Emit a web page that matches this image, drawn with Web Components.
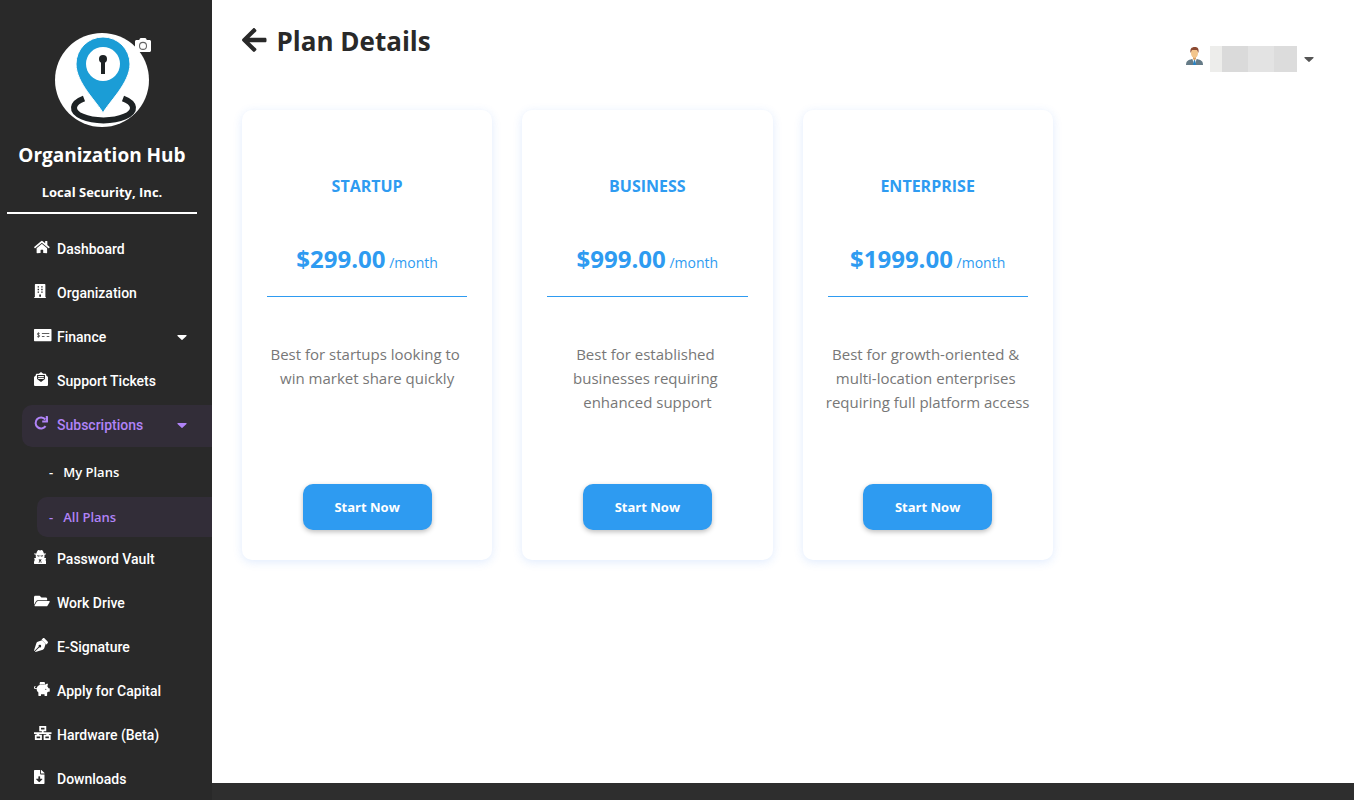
<!DOCTYPE html>
<html lang="en">
<head>
<meta charset="utf-8">
<title>Plan Details</title>
<style>
  body {
    margin: 0;
    background: #2e2e2e;
    font-family: "Open Sans", "Noto Sans", sans-serif;
  }
</style>
</head>
<body>
<hub-layout>
  <hub-sidebar slot="side" name="Organization Hub" company="Local Security, Inc.">
    <nav-item icon="home">Dashboard</nav-item>
    <nav-item icon="building">Organization</nav-item>
    <nav-item icon="check" caret>Finance</nav-item>
    <nav-item icon="mail">Support Tickets</nav-item>
    <nav-item icon="redo" caret active>Subscriptions
      <nav-subitem slot="sub">My Plans</nav-subitem>
      <nav-subitem slot="sub" active>All Plans</nav-subitem>
    </nav-item>
    <nav-item icon="spy">Password Vault</nav-item>
    <nav-item icon="folder">Work Drive</nav-item>
    <nav-item icon="pen">E-Signature</nav-item>
    <nav-item icon="pig">Apply for Capital</nav-item>
    <nav-item icon="network">Hardware (Beta)</nav-item>
    <nav-item icon="download">Downloads</nav-item>
  </hub-sidebar>
  <page-header>Plan Details</page-header>
  <plan-list>
    <plan-card name="STARTUP" price="$299.00">Best for startups looking to <br>win market share quickly</plan-card>
    <plan-card name="BUSINESS" price="$999.00">Best for established <br>businesses requiring <br>enhanced support</plan-card>
    <plan-card name="ENTERPRISE" price="$1999.00">Best for growth-oriented &amp; <br>multi-location enterprises <br>requiring full platform access</plan-card>
  </plan-list>
</hub-layout>

<script>
const icons = {
  home: ['0 0 576 512', '<path d="M280.37 148.26L96 300.11V464a16 16 0 0 0 16 16l112.06-.29a16 16 0 0 0 15.92-16V368a16 16 0 0 1 16-16h64a16 16 0 0 1 16 16v95.64a16 16 0 0 0 16 16.05L464 480a16 16 0 0 0 16-16V300L295.67 148.26a12.19 12.19 0 0 0-15.3 0zM571.6 251.47L488 182.56V44.05a12 12 0 0 0-12-12h-56a12 12 0 0 0-12 12v72.61L318.47 43a48 48 0 0 0-61 0L4.34 251.47a12 12 0 0 0-1.6 16.9l25.5 31A12 12 0 0 0 45.15 301l235.22-193.74a12.19 12.19 0 0 1 15.3 0L530.9 301a12 12 0 0 0 16.9-1.6l25.5-31a12 12 0 0 0-1.7-16.93z"/>'],
  building: ['0 0 448 512', '<path fill-rule="evenodd" d="M436 480h-20V24c0-13-11-24-24-24H56C43 0 32 11 32 24v456H12c-7 0-12 5-12 12v20h448v-20c0-7-5-12-12-12zM132 80h52v52h-52zM264 80h52v52h-52zM132 176h52v52h-52zM264 176h52v52h-52zM132 272h52v52h-52zM264 272h52v52h-52zM192 384h64v80h-64z"/>'],
  check: ['0 0 640 512', '<path fill-rule="evenodd" d="M24 32h592c13 0 24 11 24 24v400c0 13-11 24-24 24H24c-13 0-24-11-24-24V56c0-13 11-24 24-24zM288 190h272v32H288zM288 304h96v24h-96zM464 304h96v24h-96z"/><path d="M208 202c-40-22-88-14-88 20 0 44 92 24 92 68 0 36-56 42-100 20M162 160v192" fill="none" stroke="#292929" stroke-width="24"/>'],
  mail: ['0 0 512 512', '<path fill-rule="evenodd" d="M256 0l-80 64H112c-26 0-48 20-48 46v16L18 164C7 173 0 186 0 200v264c0 26 22 48 48 48h416c26 0 48-22 48-48V200c0-14-7-27-18-36l-46-38v-16c0-26-22-46-48-46h-64zM112 112h288v146L256 362 112 258z"/><path d="M152 144h208v40H152zM152 214h208v40H152z"/>'],
  redo: ['0 0 512 512', '<path d="M423 370A200 200 0 1 1 414 128" fill="none" stroke="currentColor" stroke-width="74"/><path d="M512 24v192c0 12-10 20-22 20H300v-76h130V4h60c12 0 22 8 22 20z"/>'],
  spy: ['0 0 448 512', '<path fill-rule="evenodd" d="M16 128h70c18-52 42-112 72-124 24-8 44 14 66 14s42-22 66-14c30 12 54 72 72 124h70c20 0 22 20 4 28-16 10-30 16-52 22v70c0 18-4 30-10 42h50c14 0 20 12 16 24l-20 54c16 18 28 44 28 80v38c0 16-10 28-24 28H24c-14 0-24-12-24-28v-38c0-36 12-62 28-80l-22-54c-4-12 4-24 16-24h52c-6-12-10-24-10-42v-70c-22-6-36-12-52-22-18-8-16-28 4-28zM168 326l26 56-26 86h32l16-70h16l16 70h32l-26-86 26-56-40 18h-32zM116 194c24 8 66 12 108 12s84-4 108-12v20c-14 2-20 28-52 28-28 0-38-22-56-22s-28 22-56 22c-32 0-38-26-52-28z"/>'],
  folder: ['0 0 576 512', '<path d="M572.694 292.093L500.27 416.248A63.997 63.997 0 0 1 444.989 448H45.025c-18.523 0-30.064-20.093-20.731-36.093l72.424-124.155A64 64 0 0 1 152 256h399.964c18.523 0 30.064 20.093 20.73 36.093zM152 224h328v-48c0-26.51-21.49-48-48-48H272l-64-64H48C21.49 64 0 85.49 0 112v278.046l69.077-118.418C86.214 242.25 117.989 224 152 224z"/>'],
  pen: ['0 0 512 512', '<path fill-rule="evenodd" d="M136 138c-24 8-42 26-50 50L0 460l14 14 160-160a46 46 0 1 1 24 24L38 498l14 14 272-86c24-8 42-26 50-50l52-156L292 86zM498 124L388 14c-18-18-50-18-68 0l-44 44 178 178 44-44c18-18 18-50 0-68z"/>'],
  pig: ['0 0 576 512', '<path d="M206 68a98 98 0 0 1 196 0c0 12-2 22-6 32-44-8-116-12-184 4-4-12-6-24-6-36z"/><path d="M560 224h-30c-10-24-24-42-42-58l24-102h-32c-30 0-56 14-74 36-8-2-14-4-22-4H256c-78 0-142 54-156 128H56c-14 0-26-14-22-30 2-10 14-16 24-16V144C26 142 4 168 0 192c-4 34 22 64 56 64h40c0 52 26 98 64 128v112c0 8 8 16 16 16h64c8 0 16-8 16-16v-48h128v48c0 8 8 16 16 16h64c8 0 16-8 16-16V384c14-10 24-20 34-32h46c8 0 16-8 16-16v-96c0-8-8-16-16-16zm-128 64a20 20 0 1 1 0-40 20 20 0 0 1 0 40z"/>'],
  network: ['0 0 640 512', '<path fill-rule="evenodd" d="M192 0h256v192h-96v32h288v64H544v32h64v192H352V320h96v-32H192v32h96v192H32V320h64v-32H0v-64h288v-32h-96zM256 64v64h128V64zM96 384v64h128v-64zM416 384v64h128v-64z"/>'],
  download: ['0 0 384 512', '<path d="M224 136V0H24C10.7 0 0 10.7 0 24v464c0 13.3 10.7 24 24 24h336c13.3 0 24-10.7 24-24V160H248c-13.2 0-24-10.8-24-24zm76.45 211.36l-96.42 95.7c-6.65 6.61-17.39 6.61-24.04 0l-96.42-95.7C73.42 337.29 80.54 320 94.82 320H160v-80c0-8.84 7.16-16 16-16h32c8.84 0 16 7.16 16 16v80h65.18c14.28 0 21.4 17.29 11.27 27.36zM377 105L279.1 7c-4.5-4.5-10.6-7-17-7H256v128h128v-6.1c0-6.3-2.5-12.4-7-16.9z"/>'],
  camera: ['0 0 512 512', '<path d="M512 144v288c0 26-22 48-48 48H48c-26 0-48-22-48-48V144c0-26 22-48 48-48h88l12-33c7-19 25-31 45-31h126c20 0 38 12 45 31l12 33h88c26 0 48 22 48 48z"/><circle cx="256" cy="284" r="112" fill="none" stroke="#666" stroke-width="34"/>'],
  back: ['0 0 448 512', '<path d="M257.5 445.1l-22.2 22.2c-9.4 9.4-24.6 9.4-33.9 0L7 273c-9.4-9.4-9.4-24.6 0-33.9L201.4 44.7c9.4-9.4 24.6-9.4 33.9 0l22.2 22.2c9.5 9.5 9.3 25-.4 34.3L136.6 216H424c13.3 0 24 10.7 24 24v32c0 13.3-10.7 24-24 24H136.6l120.5 114.8c9.8 9.3 10 24.8.4 34.3z"/>'],
  caret: ['0 0 320 192', '<path d="M31 32h258c18 0 27 21 14 34L174 186c-8 8-20 8-28 0L17 66C4 53 13 32 31 32z"/>']
};

function define(name, html, setup) {
  let template = document.createElement('template');
  template.innerHTML = html;
  customElements.define(name, class extends HTMLElement {
    constructor() {
      super();
      this.attachShadow({mode: 'open'}).appendChild(template.content.cloneNode(true));
    }
    connectedCallback() {
      if (setup) setup(this, this.shadowRoot);
    }
  });
}

define('hub-icon', `
  <style>
    :host { display: inline-flex; height: 14px; }
    svg { height: 100%; fill: currentColor; }
  </style>
  <svg aria-hidden="true"></svg>
`, (elt, root) => {
  let [box, shapes] = icons[elt.getAttribute('name')];
  let svg = root.querySelector('svg');
  svg.setAttribute('viewBox', box);
  svg.innerHTML = shapes;
});

define('hub-layout', `
  <style>
    :host {
      display: grid;
      grid-template-columns: 212px 1fr;
      grid-template-rows: 1fr 17px;
      height: 100vh;
      overflow: hidden;
    }
    aside {
      grid-row: 1 / 3;
      background: #292929;
      overflow: hidden;
    }
    main {
      background: #fff;
      padding: 22px 21px 22px 30px;
      overflow: hidden;
    }
  </style>
  <aside><slot name="side"></slot></aside>
  <main><slot></slot></main>
`);

define('hub-sidebar', `
  <style>
    :host { display: block; color: #fff; }
    header {
      display: flex;
      flex-direction: column;
      align-items: center;
      margin: 0 15px 15px 7px;
      padding-top: 33px;
      border-bottom: 2px solid #fff;
      text-align: center;
    }
    .logo { position: relative; height: 94px; }
    .logo button {
      position: absolute;
      top: 4px;
      right: -2px;
      display: flex;
      padding: 0;
      border: 0;
      background: none;
      color: #fff;
    }
    .logo hub-icon { height: 16px; }
    h1 { margin: 14px 0 0; font-size: 19px; line-height: 28px; white-space: nowrap; }
    h2 { margin: 13px 0 10px; font-size: 13px; line-height: 20px; }
    nav { padding-left: 22px; }
  </style>
  <header>
    <div class="logo">
      <svg width="94" height="94" viewBox="0 0 94 94" role="img" aria-label="Organization logo">
        <circle cx="47" cy="47" r="47" fill="#fff"/>
        <path d="M29 65.500A29.500 12.500 0 1 0 68 65.500" fill="none" stroke="#1d2224" stroke-width="6"/>
        <path d="M48 80C43 70 21 50 21 31a27 27 0 0 1 54 0c0 19-22 39-27 49z" fill="#1b9dd6" stroke="#fff" stroke-width="1"/>
        <circle cx="48" cy="31" r="17" fill="#fff"/>
        <circle cx="48" cy="26" r="4" fill="#1d2224"/>
        <path d="M46 26h4v15h-4z" fill="#1d2224"/>
      </svg>
      <button aria-label="Change logo"><hub-icon name="camera"></hub-icon></button>
    </div>
    <h1></h1>
    <h2></h2>
  </header>
  <nav><slot></slot></nav>
`, (elt, root) => {
  root.querySelector('h1').textContent = elt.getAttribute('name');
  root.querySelector('h2').textContent = elt.getAttribute('company');
});

define('nav-item', `
  <style>
    :host { display: block; margin-bottom: 2px; font: 500 14px/20px Roboto, sans-serif; }
    a {
      display: flex;
      align-items: center;
      box-sizing: border-box;
      height: 42px;
      padding: 0 25px 2px 12px;
      border-radius: 10px 0 0 10px;
      color: #fff;
      text-decoration: none;
    }
    .icon { width: 23px; padding-bottom: 4px; display: flex; }
    .label { flex: 1; white-space: nowrap; }
    .caret { height: 6px; }
    :host([active]) a { background: #322d38; color: #b083f7; }
    :host(:not([caret])) .caret { display: none; }
  </style>
  <a href="#">
    <span class="icon"></span>
    <span class="label"><slot></slot></span>
    <hub-icon class="caret" name="caret"></hub-icon>
  </a>
  <slot name="sub"></slot>
`, (elt, root) => {
  root.querySelector('.icon').innerHTML = `<hub-icon name="${elt.getAttribute('icon')}"></hub-icon>`;
});

define('nav-subitem', `
  <style>
    :host {
      display: block;
      margin: 5px 0 0 15px;
      font: 600 13px/20px "Open Sans", "Noto Sans", sans-serif;
    }
    a {
      display: flex;
      gap: 10px;
      align-items: center;
      height: 40px;
      padding-left: 12px;
      border-radius: 10px 0 0 10px;
      color: #fff;
      text-decoration: none;
    }
    :host([active]) a { background: #322d38; color: #b083f7; }
  </style>
  <a href="#"><span>-</span><span><slot></slot></span></a>
`);

define('page-header', `
  <style>
    :host { display: flex; justify-content: space-between; height: 88px; color: #292929; }
    .title { display: flex; gap: 10px; align-items: center; height: 38px; }
    .title a { display: flex; padding-bottom: 2px; color: inherit; }
    .title hub-icon { height: 28px; }
    h1 { margin: 0; font-size: 26px; line-height: 38px; }
    button {
      display: flex;
      align-items: center;
      height: 26px;
      margin: 24px 19px 0 0;
      padding: 0;
      border: 0;
      background: none;
      color: #555;
    }
    .avatar { margin: 0 7px 6px 0; }
    .name { width: 87px; height: 26px; margin-right: 7px; background: linear-gradient(90deg, #ededeb 12px, #dadada 12px 38px, #e3e3e3 38px 64px, #dcdcdc 64px); }
    button hub-icon { height: 6px; }
  </style>
  <div class="title">
    <a href="#" aria-label="Back"><hub-icon name="back"></hub-icon></a>
    <h1><slot></slot></h1>
  </div>
  <button aria-label="Account">
    <svg class="avatar" width="17" height="18" viewBox="0 0 17 18" aria-hidden="true">
      <path d="M0 18c0-4 2-5 6-6h5c4 1 6 2 6 6z" fill="#657b87"/>
      <path d="M6 11l2.500 7L11 11z" fill="#fff"/>
      <path d="M8 13h1l1 5H7z" fill="#2683c6"/>
      <path d="M7 9h3v3l-1.500 1.500L7 12z" fill="#d9a066"/>
      <ellipse cx="8.500" cy="6" rx="3.500" ry="5" fill="#f3c58c"/>
      <path d="M4.500 6C4 2 5 0 9 0c3 0 4 2 3.500 6L11 3H6z" fill="#8c4a32"/>
    </svg>
    <span class="name"></span>
    <hub-icon name="caret"></hub-icon>
  </button>
`);

define('plan-list', `
  <style>
    :host { display: grid; grid-template-columns: repeat(4, 1fr); gap: 30px; }
  </style>
  <slot></slot>
`);

define('plan-card', `
  <style>
    :host {
      display: flex;
      flex-direction: column;
      align-items: center;
      box-sizing: border-box;
      min-height: 450px;
      padding: 64px 20px 30px;
      border-radius: 10px;
      background: #fff;
      box-shadow: 0 2px 10px rgb(46 120 242 / 0.15);
      color: #2e9bf1;
      text-align: center;
    }
    h2 { margin: 0; font-size: 16px; line-height: 24px; }
    .price {
      align-self: stretch;
      margin: 44px 5px 45px;
      padding-bottom: 16px;
      border-bottom: 1px solid #2e9bf1;
      font-size: 14px;
      line-height: 34px;
    }
    .price b { font-size: 24px; }
    .text { flex: 1; font-size: 15px; line-height: 24px; color: #777; white-space: pre; }
    button {
      width: 129px;
      height: 46px;
      border: 0;
      border-radius: 10px;
      background: #2e9bf1;
      box-shadow: 0 2px 5px rgb(0 0 0 / 0.25);
      color: #fff;
      font: 700 13px/20px "Open Sans", "Noto Sans", sans-serif;
    }
  </style>
  <h2></h2>
  <div class="price"><b></b> /month</div>
  <div class="text"><slot></slot></div>
  <button>Start Now</button>
`, (elt, root) => {
  root.querySelector('h2').textContent = elt.getAttribute('name');
  root.querySelector('b').textContent = elt.getAttribute('price');
});
</script>
</body>
</html>
